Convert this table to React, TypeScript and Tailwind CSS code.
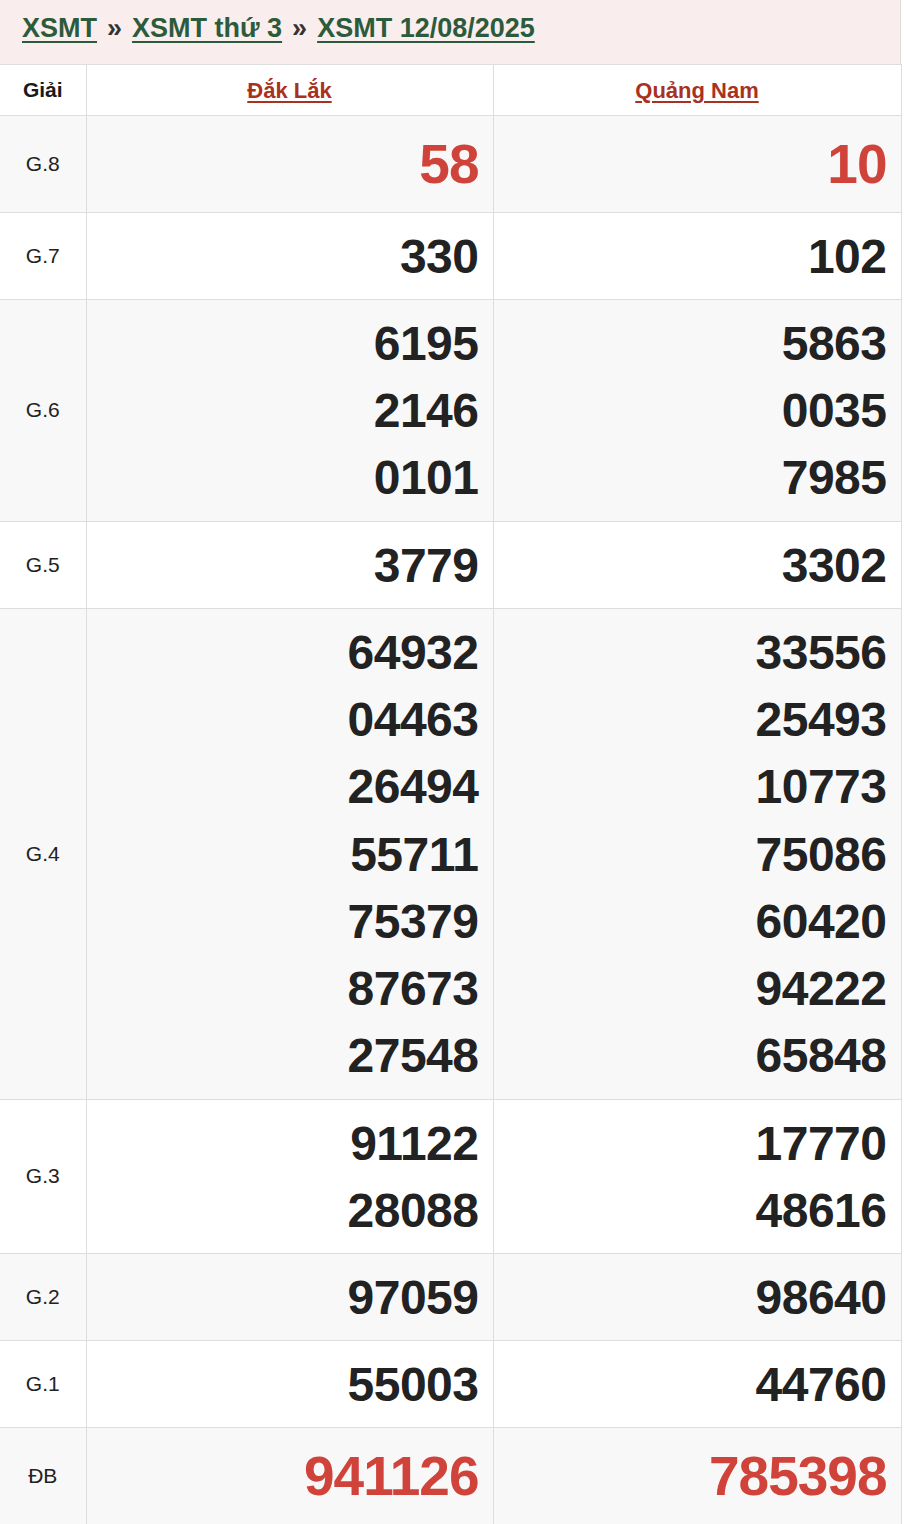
import React from 'react';

// Kết quả XSMT 12/08/2025 — bảng hai đài: Đắk Lắk, Quảng Nam

interface PrizeRow {
  label: string;
  left: string[];
  right: string[];
  highlight?: boolean;
}

const ROWS: PrizeRow[] = [
  { label: 'G.8', left: ['58'], right: ['10'], highlight: true },
  { label: 'G.7', left: ['330'], right: ['102'] },
  { label: 'G.6', left: ['6195', '2146', '0101'], right: ['5863', '0035', '7985'] },
  { label: 'G.5', left: ['3779'], right: ['3302'] },
  {
    label: 'G.4',
    left: ['64932', '04463', '26494', '55711', '75379', '87673', '27548'],
    right: ['33556', '25493', '10773', '75086', '60420', '94222', '65848'],
  },
  { label: 'G.3', left: ['91122', '28088'], right: ['17770', '48616'] },
  { label: 'G.2', left: ['97059'], right: ['98640'] },
  { label: 'G.1', left: ['55003'], right: ['44760'] },
  { label: 'ĐB', left: ['941126'], right: ['785398'], highlight: true },
];

function NumberCell({ values, highlight, shaded }: { values: string[]; highlight?: boolean; shaded: boolean }) {
  return (
    <td
      className={`border border-[#dddddd] pr-[14px] pt-[10px] pb-[8.8px] text-right align-middle ${shaded ? 'bg-[#f8f8f8]' : 'bg-white'}`}
    >
      {values.map((v, i) => (
        <div
          key={i}
          className={
            highlight
              ? 'text-[55px] leading-[77px] font-bold tracking-[-1px] text-[#d0433a]'
              : 'text-[48px] leading-[67.3px] font-bold tracking-[-0.5px] text-[#222222]'
          }
        >
          {v}
        </div>
      ))}
    </td>
  );
}

export default function App() {
  return (
    <div className="w-[901px] bg-white font-['Liberation_Sans',Arial,sans-serif]">
      {/* Breadcrumb */}
      <div className="h-[64px] bg-[#f9eded] border-r border-[#dddddd] flex items-center pl-[22px] pb-[8px] text-[27px] font-bold">
        <a className="text-[#2c5b3b] underline decoration-2 underline-offset-[4px]">XSMT</a>
        <span className="text-[#333333] px-[10px]">»</span>
        <a className="text-[#2c5b3b] underline decoration-2 underline-offset-[4px]">XSMT thứ 3</a>
        <span className="text-[#333333] px-[10px]">»</span>
        <a className="text-[#2c5b3b] underline decoration-2 underline-offset-[4px]">XSMT 12/08/2025</a>
      </div>

      <table className="w-[901px] border-collapse table-fixed">
        <colgroup>
          <col className="w-[86px]" />
          <col className="w-[407px]" />
          <col className="w-[408px]" />
        </colgroup>
        <thead>
          <tr className="h-[51px]">
            <th className="border border-[#dddddd] border-l-0 text-[21px] font-bold text-[#1a1a1a] text-center">Giải</th>
            <th className="border border-[#dddddd] text-center">
              <a className="text-[22px] font-bold text-[#a8321f] underline decoration-2 underline-offset-[3px]">Đắk Lắk</a>
            </th>
            <th className="border border-[#dddddd] text-center">
              <a className="text-[22px] font-bold text-[#a8321f] underline decoration-2 underline-offset-[3px]">Quảng Nam</a>
            </th>
          </tr>
        </thead>
        <tbody>
          {ROWS.map((row, idx) => {
            const shaded = idx % 2 === 0;
            return (
              <tr key={row.label}>
                <td
                  className={`border border-[#dddddd] border-l-0 text-center align-middle text-[21px] text-[#222222] ${shaded ? 'bg-[#f8f8f8]' : 'bg-white'}`}
                >
                  {row.label}
                </td>
                <NumberCell values={row.left} highlight={row.highlight} shaded={shaded} />
                <NumberCell values={row.right} highlight={row.highlight} shaded={shaded} />
              </tr>
            );
          })}
        </tbody>
      </table>
    </div>
  );
}
